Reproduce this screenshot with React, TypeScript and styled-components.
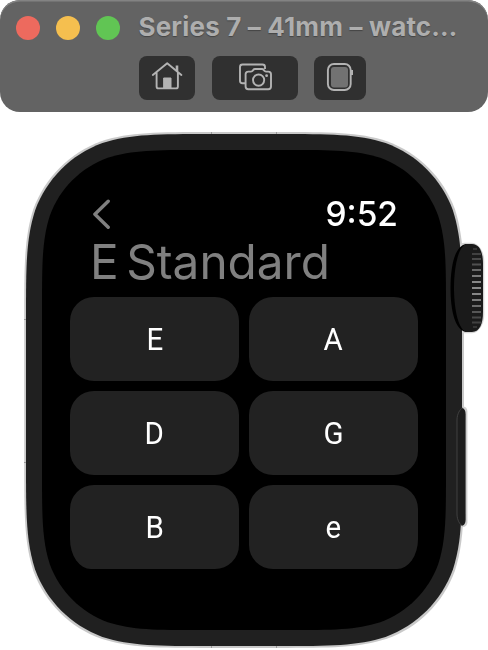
import React from "react";
import styled, { createGlobalStyle } from "styled-components";

const GlobalStyle = createGlobalStyle`
  * { box-sizing: border-box; }
  body { margin: 0; background: #fff; overflow: hidden; }
`;

const Simulator = styled.div`
  width: 488px;
  height: 650px;
  display: flex;
  flex-direction: column;
  font-family: Inter, "Liberation Sans", sans-serif;
`;

const TitleBar = styled.header`
  height: 112px;
  flex: none;
  padding: 11px 16px 12px;
  border-radius: 20px;
  background: #636363;
  box-shadow: inset 0 1.5px 0 #838383;
`;

const TitleRow = styled.div`
  display: flex;
  align-items: center;
  height: 33px;
`;

const Lights = styled.div`
  display: flex;
  gap: 16px;
  margin-right: 18.5px;
`;

const Light = styled.span<{ $color: string }>`
  width: 24px;
  height: 24px;
  border-radius: 50%;
  background: ${(p) => p.$color};
`;

const Title = styled.h1`
  margin: -2px 0 0;
  font-size: 26px;
  line-height: 33px;
  font-weight: 700;
  letter-spacing: 0.16px;
  white-space: nowrap;
  color: #aeaeae;
  text-shadow: 0 1px 1px #444;
`;

const Tools = styled.div`
  display: flex;
  margin: 12px 0 0 123px;
  gap: 16.5px;
`;

const ToolButton = styled.button<{ $width: number }>`
  width: ${(p) => p.$width}px;
  height: 44px;
  padding: 0;
  border: 0;
  border-radius: 8px;
  background: #303030;
  display: flex;
  align-items: flex-start;
  justify-content: center;
  svg { display: block; }
`;

const Watch = styled.main`
  position: relative;
  height: 538px;
  padding: 38px 42px 20px;
`;

const CaseDrawing = styled.svg`
  position: absolute;
  left: 0;
  top: 0;
`;

const Screen = styled.section`
  position: relative;
  width: 404px;
  height: 480px;
  padding: 47px 28px 0;
  display: flex;
  flex-direction: column;
  will-change: transform;
`;

const StatusRow = styled.div`
  display: flex;
  align-items: center;
  justify-content: space-between;
  height: 34px;
  padding: 0 20px 0 23px;
`;

const Clock = styled.time`
  font-size: 33.5px;
  line-height: 34px;
  font-weight: 550;
  color: #fff;
`;

const Heading = styled.h2`
  margin: 0 0 0 19.5px;
  height: 66px;
  font-size: 48px;
  line-height: 62px;
  font-weight: 420;
  word-spacing: -6px;
  white-space: nowrap;
  color: #808080;
  transform: scaleX(0.994);
  transform-origin: left;
`;

const StringGrid = styled.div`
  display: grid;
  grid-template-columns: 169px 169px;
  grid-auto-rows: 84px;
  gap: 10px;
`;

const StringButton = styled.button<{ $corners?: string }>`
  border: 0;
  padding: 2px 0 0;
  border-radius: ${(p) => p.$corners ?? "24px"};
  background: #222;
  color: #fff;
  font-family: Roboto, Inter, sans-serif;
  font-size: 31px;
  line-height: 82px;
  font-weight: 400;
`;

const Note = styled.span`
  display: inline-block;
  transform: scaleX(0.95);
`;

const strings = [
  { note: "E" },
  { note: "A" },
  { note: "D" },
  { note: "G" },
  { note: "B", corners: "24px 24px 24px 21px / 24px 24px 24px 30px" },
  { note: "e", corners: "24px 24px 21px 24px / 24px 24px 30px 24px" },
];

/* Outline of a rectangle with continuous-curvature corners. */
function squircle(x: number, y: number, w: number, h: number, r: number) {
  const a = 1.52866 * r, b = 1.08849 * r, c = 0.86841 * r;
  const d = 0.63149 * r, e = 0.07491 * r, f = 0.37282 * r, g = 0.16906 * r;
  const R = x + w, B = y + h;
  return [
    `M${x + a} ${y}H${R - a}`,
    `C${R - b} ${y} ${R - c} ${y} ${R - d} ${y + e}`,
    `C${R - f} ${y + g} ${R - g} ${y + f} ${R - e} ${y + d}`,
    `C${R} ${y + c} ${R} ${y + b} ${R} ${y + a}V${B - a}`,
    `C${R} ${B - b} ${R} ${B - c} ${R - e} ${B - d}`,
    `C${R - g} ${B - f} ${R - f} ${B - g} ${R - d} ${B - e}`,
    `C${R - c} ${B} ${R - b} ${B} ${R - a} ${B}H${x + a}`,
    `C${x + b} ${B} ${x + c} ${B} ${x + d} ${B - e}`,
    `C${x + f} ${B - g} ${x + g} ${B - f} ${x + e} ${B - d}`,
    `C${x} ${B - c} ${x} ${B - b} ${x} ${B - a}V${y + a}`,
    `C${x} ${y + b} ${x} ${y + c} ${x + e} ${y + d}`,
    `C${x + g} ${y + f} ${x + f} ${y + g} ${x + d} ${y + e}`,
    `C${x + c} ${y} ${x + b} ${y} ${x + a} ${y}Z`,
  ].join("");
}

const ridges = [
  [249, "#353535"], [254, "#404040"], [259, "#484848"], [264.5, "#505050"],
  [270, "#686868"], [276, "#7a7a7a"], [282, "#888"], [288, "#8a8a8a"],
  [294, "#868686"], [300, "#7a7a7a"], [306, "#6c6c6c"], [312, "#565656"],
  [317.5, "#484848"], [322.5, "#404040"], [327, "#353535"],
] as const;

const WatchCase = () => (
  <CaseDrawing width="488" height="538" viewBox="0 112 488 538" aria-hidden="true">
    <path d={squircle(24.2, 132, 439.8, 516, 122)} fill="#c9c9c9" />
    <path d="M211.5 132v2M276.5 132v2M211.5 646v2M276.5 646v2" stroke="#999" />
    <path d="M24 319.5h2M24 462.5h2" stroke="#999" />
    <rect x="452" y="242.8" width="32.3" height="90.4" rx="13" ry="19" fill="#d4d4d4" />
    <rect x="456" y="406.5" width="11.4" height="120.5" rx="4.5" fill="#cecece" />
    <path d={squircle(26, 134, 436, 512, 121)} fill="#202020" />
    <path d="M466 244C455 246 450.5 265 450.5 288S455 330 466 332Z" fill="#000" />
    <path d="M466 244h6c8 0 11 9 11 20v48c0 11-3 20-11 20h-6C457 328 454 305 454 288S457 248 466 244Z" fill="#1a1a1a" />
    {ridges.map(([y, color]) => (
      <path key={y} d={`M${y < 252 || y > 325 ? 473 : 472} ${y}H${y < 252 || y > 325 ? 477 : 481}`} stroke={color} strokeWidth="2" />
    ))}
    <path d="M462.5 408C464.3 408.4 465.6 411 465.6 414V520C465.6 523 464.3 525.2 462.5 525.6C460 525 457 520 457 514V420C457 414 460 409 462.5 408Z" fill="#1d1d1d" />
    <path d="M462.5 408C460 409 457 414 457 420V514C457 520 460 525 462.5 525.6" fill="none" stroke="#404040" />
    <path d={squircle(42, 150, 404, 480, 104)} fill="#000" />
  </CaseDrawing>
);

const HomeIcon = () => (
  <svg width="56" height="44" viewBox="0 0 56 44" fill="none" stroke="#b3b3b3" strokeWidth="1.9" strokeLinecap="round" strokeLinejoin="round">
    <path d="M13.8 19 28.2 7.2 42.4 19M17.6 16.5V30.5Q17.6 32.4 19.5 32.4H37Q38.9 32.4 38.9 30.5V16.5" />
    <path d="M38 15V9.5" strokeWidth="2.6" strokeLinecap="butt" />
    <path d="M25 22h7v10h-7z" fill="#b3b3b3" strokeWidth="1" />
  </svg>
);

const CameraIcon = () => (
  <svg width="86" height="44" viewBox="0 0 86 44" fill="none" stroke="#b3b3b3" strokeWidth="1.9" strokeLinejoin="round">
    <path d="M33 27.2H30.5Q28 27.2 28 24.7V11Q28 8.5 30.5 8.5H50.5Q53 8.5 53 11V13" />
    <path d="M36.3 15.6H39Q40.2 15.6 40.8 14.6L41.3 13.9Q41.9 13 43 13H50Q51.1 13 51.7 13.9L52.2 14.6Q52.8 15.6 54 15.6H56.3Q59 15.6 59 18.3V30.5Q59 33.2 56.3 33.2H36.3Q33.6 33.2 33.6 30.5V18.3Q33.6 15.6 36.3 15.6Z" />
    <circle cx="46.6" cy="24.1" r="5.6" />
    <circle cx="54.6" cy="19.7" r="1.4" fill="#b3b3b3" stroke="none" />
  </svg>
);

const WatchIcon = () => (
  <svg width="52" height="44" viewBox="0 0 52 44" fill="none">
    <path d="M37 14h2v5h-2z" fill="#b3b3b3" />
    <rect x="13.9" y="8" width="22.8" height="26" rx="6" stroke="#b3b3b3" strokeWidth="1.9" />
    <rect x="17" y="11" width="17" height="20.6" rx="3" fill="#727272" />
  </svg>
);

const BackIcon = () => (
  <svg width="18" height="32" viewBox="0 0 18 32" fill="none" stroke="#808080" strokeWidth="3.4" strokeLinecap="round" strokeLinejoin="round">
    <path d="M15.2 3.2 1.9 16.2 15.2 29.2" />
  </svg>
);

export default function App() {
  return (
    <Simulator>
      <GlobalStyle />
      <TitleBar>
        <TitleRow>
          <Lights>
            <Light $color="#ed6a5e" />
            <Light $color="#f5bf4f" />
            <Light $color="#61c554" />
          </Lights>
          <Title>Series 7 – 41mm – watc…</Title>
        </TitleRow>
        <Tools>
          <ToolButton $width={56} aria-label="Home"><HomeIcon /></ToolButton>
          <ToolButton $width={86} aria-label="Screenshot"><CameraIcon /></ToolButton>
          <ToolButton $width={52} aria-label="Device"><WatchIcon /></ToolButton>
        </Tools>
      </TitleBar>
      <Watch>
        <WatchCase />
        <Screen>
          <StatusRow>
            <BackIcon />
            <Clock>9:52</Clock>
          </StatusRow>
          <Heading>E Standard</Heading>
          <StringGrid>
            {strings.map(({ note, corners }) => (
              <StringButton key={note} $corners={corners}><Note>{note}</Note></StringButton>
            ))}
          </StringGrid>
        </Screen>
      </Watch>
    </Simulator>
  );
}
